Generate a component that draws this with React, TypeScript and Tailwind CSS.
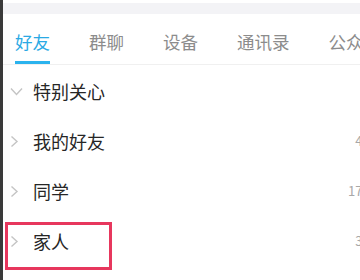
const tabs = ["好友", "群聊", "设备", "通讯录", "公众号"];

const groups: { name: string; open?: boolean; count?: string }[] = [
  { name: "特别关心", open: true },
  { name: "我的好友", count: "4/12" },
  { name: "同学", count: "17/39" },
  { name: "家人", count: "3/15" },
];

function Chevron({ open }: { open?: boolean }) {
  // 展开的分组是向下箭头，其余是向右
  return open ? (
    <svg width="13" height="9" viewBox="0 0 13 9" fill="none">
      <path d="M1 1.5l5.5 6 5.5-6" stroke="#c4c4c4" strokeWidth="1.4" />
    </svg>
  ) : (
    <svg width="13" height="11" viewBox="0 0 13 11" fill="none">
      <path d="M1.5 0.5l5.5 5-5.5 5" stroke="#c4c4c4" strokeWidth="1.4" />
    </svg>
  );
}

export default function App() {
  return (
    <div
      className="relative flex h-[280px] w-[360px] overflow-hidden bg-white"
      style={{ fontFamily: '"Noto Sans CJK SC", "Noto Sans", sans-serif' }}
    >
      <div className="w-[3px] shrink-0 bg-[#3a3a3a]" />
      <div className="flex min-w-0 flex-1 flex-col">
        <div className="pt-[3px]">
          <div className="h-[11px] bg-[#f3f3f6]" />
        </div>

        <div className="flex gap-[31px] whitespace-nowrap border-b border-[#f0f0f0] pl-[8px]">
          {tabs.map((tab, i) => (
            <div key={tab} className="flex shrink-0 flex-col px-[4px] pt-[16px]">
              <span
                className={
                  i === 0
                    ? "text-[17.5px] leading-[24px] text-[#2aa9e4]"
                    : "text-[17.5px] leading-[24px] text-[#8c8c8c]"
                }
              >
                {tab}
              </span>
              <div className={i === 0 ? "mt-[7px] h-[3px] bg-[#2bb3ee]" : "mt-[7px] h-[3px]"} />
            </div>
          ))}
        </div>

        <ul className="mt-[1px]">
          {groups.map((g) => (
            <li key={g.name} className="flex h-[50px] items-center">
              <div className="flex w-[13px] justify-center ml-[7px]">
                <Chevron open={g.open} />
              </div>
              <span className="ml-[10px] text-[18px] leading-none text-[#262626]">{g.name}</span>
              {g.count ? (
                <span className="ml-auto mr-[-22px] text-[13px] text-[#a8a8a8]">{g.count}</span>
              ) : null}
            </li>
          ))}
        </ul>
      </div>

      <div className="pointer-events-none absolute left-[5px] top-[222px] h-[48px] w-[107px] border-[3px] border-[#e7375d]" />
    </div>
  );
}
